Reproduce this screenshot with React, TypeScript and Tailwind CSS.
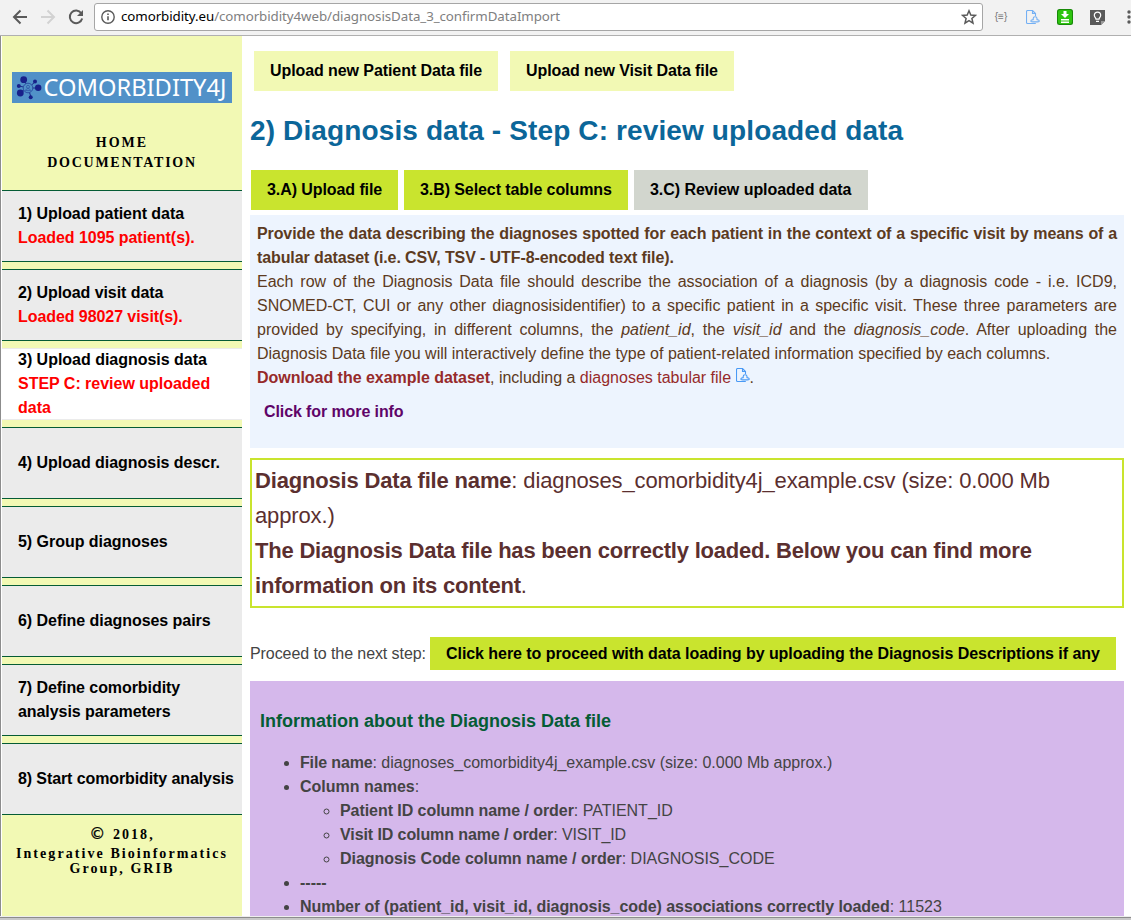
import React from "react";

const SANS = "font-['Liberation_Sans',Arial,sans-serif]";

const menu: { title: string; note?: string; active?: boolean; tracking: string }[] = [
  { title: "1) Upload patient data", note: "Loaded 1095 patient(s).", tracking: "tracking-[-0.050px]" },
  { title: "2) Upload visit data", note: "Loaded 98027 visit(s).", tracking: "tracking-[-0.070px]" },
  { title: "3) Upload diagnosis data", note: "STEP C: review uploaded data", active: true, tracking: "tracking-[-0.020px]" },
  { title: "4) Upload diagnosis descr.", tracking: "tracking-[-0.030px]" },
  { title: "5) Group diagnoses", tracking: "tracking-[-0.030px]" },
  { title: "6) Define diagnoses pairs", tracking: "tracking-[-0.050px]" },
  { title: "7) Define comorbidity analysis parameters", tracking: "tracking-[-0.070px]" },
  { title: "8) Start comorbidity analysis", tracking: "tracking-[-0.100px]" },
];

function FileIcon({ className }: { className?: string }) {
  return (
    <svg viewBox="0 0 14 15" width="14" height="15" fill="none" stroke="#4a9af5" strokeWidth="1.100" className={className}>
      <path d="M9.800 13.500H1.500a1 1 0 0 1-1-1v-11a1 1 0 0 1 1-1H6.500L9.500 3.500V6M6.500.5v3h3" />
      <path d="M7.200 9.600V8.600a1.900 1.900 0 0 1 3.800 0v1c1.400.2 2.300.8 2.300 1.300 0 .7-1.300 1-4.200 1s-4.300-.3-4.300-1c0-.6 1-1.100 2.400-1.300z" />
    </svg>
  );
}

function Toolbar() {
  return (
    <div className="flex h-9 shrink-0 items-center border-b border-[#b0b0b0] bg-[#f2f2f2] pb-px pl-[12px]">
      <svg width="16" height="16" viewBox="0 0 16 16" fill="none" stroke="#5a5a5a" strokeWidth="2" className="shrink-0">
        <path d="M15 8H2.500M8.500 1.500L2 8l6.500 6.500" />
      </svg>
      <svg width="16" height="16" viewBox="0 0 16 16" fill="none" stroke="#d2d2d2" strokeWidth="2" className="ml-[12px] shrink-0">
        <path d="M1 8h12.500M7.500 1.500L14 8l-6.500 6.500" />
      </svg>
      <svg width="16" height="16" viewBox="0 0 16 16" className="ml-[12px] shrink-0">
        <path d="M13.300 4.200A6.300 6.300 0 1 0 14.200 9.500" fill="none" stroke="#5a5a5a" strokeWidth="2" />
        <path d="M15 1v6H9z" fill="#5a5a5a" />
      </svg>
      <div className="ml-[10px] flex h-7 w-[889px] shrink-0 items-center rounded-[3px] border border-[#a6a6a6] bg-white pl-[6px] pr-[5px]">
        <svg width="14" height="14" viewBox="0 0 14 14" fill="none" stroke="#5a5a5a" strokeWidth="1.400">
          <circle cx="7" cy="7" r="6.200" />
          <path d="M7 6.200v4M7 3.500v1.500" strokeWidth="1.600" />
        </svg>
        <div className="ml-[6px] h-[22px] flex-1 whitespace-pre font-['Noto_Sans',sans-serif] text-[13.330px] leading-5 tracking-[-0.075px] text-[#808080]">
          <span className="text-black">comorbidity.eu</span>/comorbidity4web/diagnosisData_3_confirmDataImport
        </div>
        <svg width="16" height="16" viewBox="0 0 16 16" fill="none" stroke="#5a5a5a" strokeWidth="1.500">
          <path d="M8 1.800l1.800 4.200 4.700.4-3.600 3.100 1.100 4.600L8 11.700l-4 2.400 1.100-4.600L1.500 6.400 6.200 6z" />
        </svg>
      </div>
      <span className="ml-[10px] w-4 shrink-0 text-center font-['Liberation_Sans',sans-serif] text-[10px] leading-none text-[#777]">{"{≡}"}</span>
      <FileIcon className="ml-[17px] shrink-0 opacity-75" />
      <svg width="16" height="16" viewBox="0 0 16 16" className="ml-[17px] shrink-0">
        <rect width="16" height="16" rx="2.500" fill="#188a08" />
        <rect x="1" y="1" width="14" height="14" rx="2" fill="#2fc410" />
        <path d="M6.500 2h3v3h2.500L8 9 4 5h2.500zM4 10h8v1.500H4zM4 12.500h8V14H4z" fill="#fff" />
      </svg>
      <svg width="15" height="15" viewBox="0 0 15 15" className="ml-[17px] shrink-0">
        <path d="M0 0h15v11l-4 4H0z" fill="#5a5a5a" />
        <path d="M15 11l-4 4v-4z" fill="#999" />
        <path d="M6 9.200C6 8 4.300 7.200 4.300 5.300a3.200 3.200 0 0 1 6.400 0C10.700 7.200 9 8 9 9.200zM6 11.300h3" fill="none" stroke="#fff" strokeWidth="1.200" />
      </svg>
      <svg width="4" height="14" viewBox="0 0 4 14" className="ml-[22px] shrink-0" fill="#5a5a5a">
        <circle cx="2" cy="2" r="1.700" />
        <circle cx="2" cy="7" r="1.700" />
        <circle cx="2" cy="12" r="1.700" />
      </svg>
    </div>
  );
}

function Logo() {
  return (
    <div className="mx-[10px] mt-[36px] flex h-[31px] items-center bg-[#5191c8]">
      <svg width="220" height="31" viewBox="0 0 220 31">
        <g stroke="#1b2a8c" strokeWidth="1">
          <path d="M16 16L12 8M16 16l7-6M16 16h10M16 16l3 9M16 16l-8 5M16 16l-9-2" />
        </g>
        <circle cx="16" cy="16" r="4.800" fill="#5191c8" stroke="#2c50a4" strokeWidth="1" />
        <circle cx="16" cy="14.800" r="1.500" fill="none" stroke="#2c50a4" strokeWidth=".7" />
        <path d="M13.500 18.600c.3-2.600 4.700-2.600 5 0z" fill="none" stroke="#2c50a4" strokeWidth=".7" />
        <g fill="#18218a">
          <circle cx="11.700" cy="7.700" r="3.400" />
          <circle cx="23" cy="9.500" r="2" />
          <circle cx="26.200" cy="15.700" r="3.200" />
          <circle cx="18.700" cy="25.300" r="2" />
          <circle cx="8.300" cy="21" r="3.400" />
          <circle cx="6.800" cy="14" r="2" />
        </g>
        <text x="31.500" y="24.300" textLength="183" lengthAdjust="spacingAndGlyphs" fill="#fff" fontSize="24" fontWeight="400" fontFamily="'Noto Sans', 'Open Sans', sans-serif">COMORBIDITY4J</text>
      </svg>
    </div>
  );
}

function Sidebar() {
  return (
    <aside className="w-[240px] shrink-0 overflow-hidden bg-[#f2f9b4] font-bold text-black">
      <Logo />
      <div className="mt-[30px] h-[57px] text-center font-['Liberation_Serif',serif] text-[14px] leading-5">
        <div className="tracking-[2px]">HOME</div>
        <div className="tracking-[1.730px]">DOCUMENTATION</div>
      </div>
      <nav className="flex flex-col gap-[7px]">
        {menu.map((m) => (
          <div
            key={m.title}
            className={`flex h-[72px] flex-col justify-center border-y pl-4 text-[16px] leading-6 ${m.tracking} ${m.active ? "border-[#ebebeb] bg-white pr-4" : "border-[#055c35] bg-[#ebebeb]"}`}
          >
            <div>{m.title}</div>
            {m.note && <div className="text-[#ff0000]">{m.note}</div>}
          </div>
        ))}
      </nav>
      <div className="mt-[10px] text-center font-['Liberation_Serif',serif] text-[14px] leading-[15px] tracking-[2.070px]">
        <div className="h-[21px] leading-[19px]">
          <span className="font-['DejaVu_Sans',sans-serif] text-[16px] font-normal leading-none [-webkit-text-stroke:0.3px_black]">©</span> 2018,
        </div>
        <div>Integrative Bioinformatics</div>
        <div>Group, GRIB</div>
      </div>
    </aside>
  );
}

function Content() {
  return (
    <main className="ml-2 w-[874px] shrink-0 text-[16px] leading-6 text-[#444444]">
      <div className="ml-1 mt-[15px] flex gap-3 whitespace-nowrap font-bold text-black">
        <div className="h-10 w-[244px] bg-[#f2f9b4] px-4 leading-10 tracking-[-0.080px]">Upload new Patient Data file</div>
        <div className="h-10 w-[224px] bg-[#f2f9b4] px-4 leading-10 tracking-[-0.100px]">Upload new Visit Data file</div>
      </div>
      <h1 className="mt-[20px] h-10 whitespace-nowrap text-[28px] font-bold leading-10 tracking-[0.125px] text-[#0b6699]">2) Diagnosis data - Step C: review uploaded data</h1>
      <div className="ml-px mt-[19px] flex gap-[6px] whitespace-nowrap font-bold text-black">
        <div className="h-10 w-[147px] bg-[#c9e42e] px-4 leading-10 tracking-[-0.080px]">3.A) Upload file</div>
        <div className="h-10 w-[224px] bg-[#c9e42e] px-4 leading-10 tracking-[-0.080px]">3.B) Select table columns</div>
        <div className="h-10 w-[234px] bg-[#d2d6ce] px-4 leading-10 tracking-[-0.050px]">3.C) Review uploaded data</div>
      </div>
      <section className="mt-[5px] h-[233px] bg-[#edf4fe] px-[7px] pt-[7px] text-[#5c3a21]">
        <p className="text-justify">
          <b className="tracking-[-0.100px]">Provide the data describing the diagnoses spotted for each patient in the context of a specific visit by means of a tabular dataset (i.e. CSV, TSV - UTF-8-encoded text file).</b>
          <br />
          Each row of the Diagnosis Data file should describe the association of a diagnosis (by a diagnosis code - i.e. ICD9, SNOMED-CT, CUI or any other diagnosisidentifier) to a specific patient in a specific visit. These three parameters are provided by specifying, in different columns, the <i>patient_id</i>, the <i>visit_id</i> and the <i>diagnosis_code</i>. After uploading the Diagnosis Data file you will interactively define the type of patient-related information specified by each columns.
          <br />
          <b className="tracking-[-0.030px] text-[#962a2a]">Download the example dataset</b>, including a <span className="text-[#962a2a]">diagnoses tabular file <FileIcon className="inline-block align-[0px]" /></span>.
        </p>
        <div className="ml-[7px] mt-[10px] font-bold tracking-[-0.100px] text-[#5f0468]">Click for more info</div>
      </section>
      <section className="mt-[10px] h-[150px] border-2 border-[#c9e42e] px-[3px] pt-[3px] text-[22px] leading-[35px] tracking-[-0.130px] text-[#5b2f2f]">
        <b className="tracking-[-0.170px]">Diagnosis Data file name</b>: diagnoses_comorbidity4j_example.csv (size: 0.000 Mb
        <br />
        approx.)
        <br />
        <b className="tracking-[-0.210px]">
          The Diagnosis Data file has been correctly loaded. Below you can find more
          <br />
          information on its content
        </b>.
      </section>
      <div className="mt-[29px] flex h-[33px] items-center whitespace-nowrap">
        <span className="w-[180px] tracking-[-0.080px]">Proceed to the next step:</span>
        <span className="h-[33px] w-[686px] bg-[#c9e42e] px-4 font-bold leading-[33px] tracking-[-0.058px] text-black">Click here to proceed with data loading by uploading the Diagnosis Descriptions if any</span>
      </div>
      <section className="mt-[11px] h-[300px] bg-[#d5b8eb] px-[10px] pt-[27px]">
        <h2 className="h-[43px] text-[18px] font-bold leading-[26px] text-[#055c35]">Information about the Diagnosis Data file</h2>
        <ul className="list-disc pl-10">
          <li><b className="tracking-[-0.150px]">File name</b>: diagnoses_comorbidity4j_example.csv (size: 0.000 Mb approx.)</li>
          <li>
            <b>Column names</b>:
            <ul className="list-[circle] pl-10">
              <li><b className="tracking-[-0.060px]">Patient ID column name / order</b>: PATIENT_ID</li>
              <li><b className="tracking-[-0.090px]">Visit ID column name / order</b><span className="tracking-[-0.100px]">: VISIT_ID</span></li>
              <li><b className="tracking-[-0.030px]">Diagnosis Code column name / order</b>: DIAGNOSIS_CODE</li>
            </ul>
          </li>
          <li><b>-----</b></li>
          <li><b className="tracking-[-0.055px]">Number of (patient_id, visit_id, diagnosis_code) associations correctly loaded</b>: 11523</li>
        </ul>
      </section>
    </main>
  );
}

export default function App() {
  return (
    <div className={`flex h-[920px] w-[1131px] flex-col overflow-hidden bg-white ${SANS}`}>
      <Toolbar />
      <div className="flex h-[880px] shrink-0 overflow-hidden border-l border-[#8c8c8c] pl-px">
        <Sidebar />
        <Content />
      </div>
      <div className="h-[4px] shrink-0 border-t border-[#eeeeee] bg-[#c8c8c8]">
        <div className="h-px bg-[#8c8c8c]" />
      </div>
    </div>
  );
}
